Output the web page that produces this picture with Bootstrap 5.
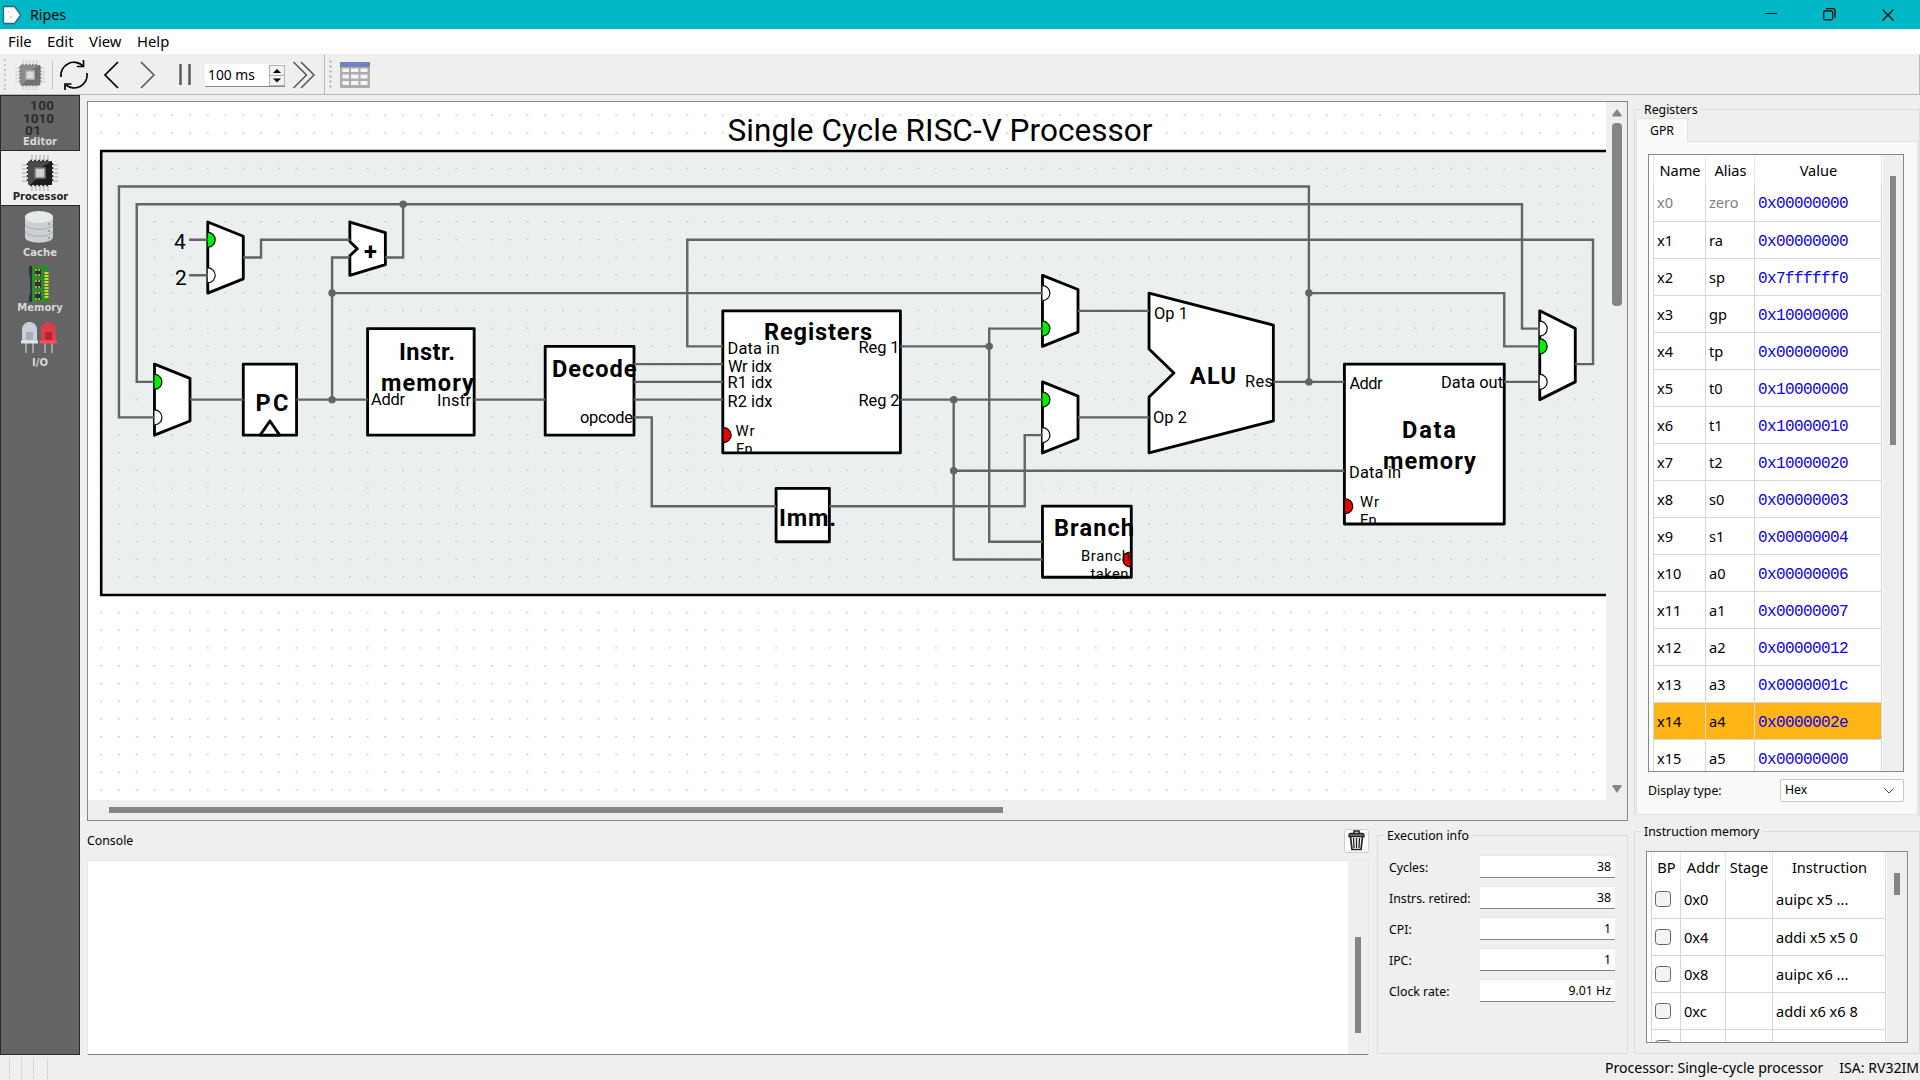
<!DOCTYPE html>
<html lang="en">
<head>
<meta charset="utf-8">
<title>Ripes</title>
<link rel="stylesheet" href="https://cdn.jsdelivr.net/npm/bootstrap@5.3.0/dist/css/bootstrap.min.css">
<style>
html,body{width:1920px;height:1080px;overflow:hidden}
body{background:#efefef;color:#000;font-family:"Noto Sans","Open Sans",sans-serif;font-size:12.3px;line-height:1.2}
svg{display:block;flex:none}
.titlebar{height:29px;background:#00b7c6;font-size:14.2px}
.app-icon{margin-left:2px}
.winctl{width:58.5px;height:29px}
.menus{height:26px;background:#fff;font-size:14.8px;border-bottom:1px solid #eee;padding-top:1px}
.menus a{color:#000;text-decoration:none}
.tools{height:40px;border-bottom:1px solid #b8b8b8;border-right:1px solid #b8b8b8}
.tool-split{border-left:1px solid #b8b8b8;width:5px}
.grip{width:3px;height:31px;background:radial-gradient(circle,#bbb 1.2px,transparent 1.4px) 0 0/3px 5px}
.spinbox{width:80px;height:23px;background:#fff;border-bottom:1px solid #868686;font-size:13.8px;padding-left:3px}
.spinbtns{width:16px;height:21px;border:1px solid #b0b0b0;background:#f3f3f3}
.main-area{height:961px}
.side{width:80px;height:960px;background:#646464;border:1px solid #2a2a2a}
.side-item{height:55px;color:#d8d8d8;font:bold 10px "DejaVu Sans",sans-serif;padding-bottom:3px}
.side-item svg{margin-right:2px}
.side-item.on{background:#efefef;color:#222;border-bottom:1px solid #2a2a2a;margin-right:-1px}
.side-item.edge{border-bottom:1px solid #2a2a2a}
.centre{width:1541px;margin-left:7px;padding-top:6px}
.viewer{height:720px;border:1px solid #828790}
.vbar{width:21px;height:698px}
.thumb{background:#858585}
.console-head{height:39px}
.trash{width:25px;height:24px;background:#fdfdfd;border:1px solid #cfcfcf;border-radius:3px}
.console{width:1282px;height:195px;background:#fff;border:1px solid #e8e8e8;border-bottom-color:#858585}
.console-bar{width:20px;background:#efefef;padding:76px 0 0 7px}
.group{border:1px solid #dcdcdc}
.group-title{height:18px;line-height:20px;background:#efefef;padding:0 3px;margin-top:-10px;width:max-content}
.exec{width:251px;height:219px;margin:14px 0 0 8px}
.field{width:135px;height:23px;background:#fff;border-bottom:1px solid #858585;line-height:22px;padding-right:4px;border-top:1px solid #e8e8e8}
.rightcol{width:286px;margin-left:6px;padding-top:14px}
.regs{height:707px;border-bottom-width:0}
.gpr-tab{width:52px;height:24px;background:#f9f9f9;border:1px solid #e3e3e3;border-bottom:0;line-height:24px;margin:0 0 -1px 1px;position:relative}
.pane{height:674px;width:282px;margin-left:1px;background:#f9f9f9;border:1px solid #e3e3e3;padding:12px 12px 0 11px}
.frame{border:1px solid #828790;background:#fff;overflow:hidden}
.gridt{table-layout:fixed;border-collapse:collapse;font-size:14.6px;line-height:18px;margin-left:4px;flex:none}
.gridt th{height:29px;font-weight:400;text-align:center;padding:1px 0 0 1px;border:solid #e6e6e6;border-width:0 1px}
.gridt td{height:37px;padding:0 0 0 3px;border:1px solid #d6d6d6;white-space:nowrap}
.gridt tr:nth-child(2) td{border-top:0}
.gridt .hexv{font-family:"Liberation Mono",monospace;font-size:16px;letter-spacing:-.6px;color:#0c00f2;padding:4px 0 0 3px}
.gridt .hot td{background:#ffb516}
.gutter{background:#efefef}
.combo{width:124px;height:23px;background:#fff;border:1px solid #c8c8c8;border-radius:2px}
.imem{height:223px;margin-top:15px}
.cbx{width:16px;height:16px;border:1px solid #666;border-radius:3.5px;background:#f3f3f3}
.status{height:24px;font-size:14.07px}
.tick{width:1px;height:21px;background:#d5d5d5}
.dg text{font-family:Roboto,sans-serif;fill:#000}
.dg .b text{font-weight:700;font-size:23.6px}
.dg .s text{font-size:16.4px}
.dg .box{fill:#fff;stroke:#000;stroke-width:1.6;stroke-linejoin:round}
.dg .wire{fill:none;stroke:#646464;stroke-width:1.35}
.dg .dot{fill:#646464}
.dg .port{stroke:#000;stroke-width:.65}
</style>
<script src="https://cdn.jsdelivr.net/npm/bootstrap@5.3.0/dist/js/bootstrap.bundle.min.js"></script>
</head>
<body>
<svg width="0" height="0" class="position-absolute">
<defs>
<g id="chip">
<path d="M10 0V36M14 0V36M18 0V36M22 0V36M26 0V36M0 10H36M0 14H36M0 18H36M0 22H36M0 26H36" stroke="#c4c4b4" stroke-width="1.700"/>
<rect x="6" y="6" width="24" height="24" rx="1" fill="#4a4a4a"/>
<path d="M30 6V30H8L20 18V12Z" fill="#1c1c1c"/>
<path d="M8 5.500H28M8 30.500H28M5.500 8V28M30.500 8V28" stroke="#333" stroke-width="1.500" stroke-dasharray="2 2"/>
<rect x="13" y="13" width="10" height="10" fill="#cfcfcf" stroke="#777" stroke-width="1.500"/>
</g>
</defs>
</svg>

<div class="titlebar d-flex align-items-center">
<svg width="20" height="20" class="app-icon" viewBox="0 0 20 20"><path d="M2.500 1.500H12.500L18.500 10L12.500 18.500H2.500Q1.500 18.500 1.500 17.500V2.500Q1.500 1.500 2.500 1.500Z" fill="#fff" stroke="#345c86" stroke-width="1.300"/><path d="M4 7h1M6 7h1M8 11l1 2 1-2" stroke="#b0b8c0" fill="none" stroke-width=".7"/></svg>
<span class="ms-1 ps-1">Ripes</span>
<div class="ms-auto d-flex">
<div class="winctl d-flex align-items-center justify-content-center"><svg width="12" height="12"><path d="M0 4.500H12" stroke="#000"/></svg></div>
<div class="winctl d-flex align-items-center justify-content-center"><svg width="13" height="13" fill="none" stroke="#000" stroke-width="1.200"><rect x=".7" y="2.800" width="9" height="9" rx="1.500"/><path d="M3 .7H10Q12 .7 12 2.700V9.500"/></svg></div>
<div class="winctl d-flex align-items-center justify-content-center" style="margin-right:3px"><svg width="12" height="12" stroke="#000" stroke-width="1.100"><path d="M.5.5L11.500 11.500M11.500.5L.5 11.500"/></svg></div>
</div>
</div>

<nav class="menus d-flex align-items-center ps-2">
<a href="#" style="width:39px">File</a><a href="#" style="width:42px">Edit</a><a href="#" style="width:48px">View</a><a href="#">Help</a>
</nav>

<div class="tools d-flex align-items-center">
<svg width="324" height="39" viewBox="0 55 324 39" fill="none">
<g fill="#b8b8b8"><circle cx="5" cy="60" r="1"/><circle cx="5" cy="65" r="1"/><circle cx="5" cy="70" r="1"/><circle cx="5" cy="75" r="1"/><circle cx="5" cy="80" r="1"/><circle cx="5" cy="85" r="1"/><circle cx="5" cy="89" r="1"/></g>
<use href="#chip" transform="translate(15 60) scale(.84)" opacity=".6"/>
<path d="M52.500 60V90" stroke="#c8c8c8"/>
<g stroke="#000" stroke-width="1.700"><path d="M61 77A13 13 0 0 1 83 66M87 73A13 13 0 0 1 66 85"/><path d="M83.500 60V66.500H77M65 90V84H71.500"/></g>
<path d="M118 62L105 75L118 88" stroke="#000" stroke-width="1.700"/>
<path d="M141 62L154 75L141 88" stroke="#555" stroke-width="1.500"/>
<path d="M180.500 64V85M189.500 64V85" stroke="#606060" stroke-width="2.600"/>
<path d="M293.500 62L306.500 75L293.500 88M301 62L314 75L301 88" stroke="#555" stroke-width="1.500"/>
<foreignObject x="205" y="64" width="80" height="24">
<div class="spinbox d-flex align-items-center justify-content-between"><span>100 ms</span>
<div class="spinbtns"><svg width="14" height="19"><path d="M0 9.500H14" stroke="#b0b0b0"/><path d="M3 7L7 3L11 7ZM3 12.500L7 16.500L11 12.500Z" fill="#000"/></svg></div></div>
</foreignObject>
</svg>
<div class="tool-split align-self-stretch"></div>
<div class="grip"></div>
<svg width="30" height="26" class="ms-2"><path d="M0 0H30V26H0Z" fill="#acacac"/><path d="M0 0H30V5H0Z" fill="#7181be"/><g fill="#f4f4f4"><path d="M2.500 6.500h6.500v3.500h-6.500zM11 6.500h7.500v3.500h-7.500zM20.500 6.500h7v3.500h-7zM2.500 12.500h6.500v4h-6.500zM11 12.500h7.500v4h-7.500zM20.500 12.500h7v4h-7zM2.500 19h6.500v4h-6.500zM11 19h7.500v4h-7.500zM20.500 19h7v4h-7z"/></g></svg>
</div>

<div class="main-area d-flex">
<aside class="side">
<div class="side-item edge d-flex flex-column align-items-center justify-content-end"><svg width="34" height="38" viewBox="0 0 34 38" fill="#2c2c2c" font-family="Roboto" font-weight="700" font-size="13.500"><text x="8" y="11.500" textLength="24">100</text><text x="1" y="24.500" textLength="31">1010</text><text x="3" y="37" textLength="16">01</text></svg><span>Editor</span></div>
<div class="side-item on d-flex flex-column align-items-center justify-content-end"><svg width="36" height="36"><use href="#chip"/></svg><span>Processor</span></div>
<div class="side-item d-flex flex-column align-items-center justify-content-end"><svg width="28" height="32" class="mb-1"><path d="M0 6V26C0 33.500 28 33.500 28 26V6Z" fill="#cbd0d3"/><ellipse cx="14" cy="6" rx="14" ry="6" fill="#e6e9ea"/><path d="M0 13C1 20 27 20 28 13M0 20C1 27 27 27 28 20" fill="none" stroke="#a5abaf"/><path d="M23 13h2M23 20h2M23 27h2" stroke="#8c9296" stroke-width="1.500"/></svg><span>Cache</span></div>
<div class="side-item d-flex flex-column align-items-center justify-content-end"><svg width="20" height="36"><path d="M0 0H4V36H0V29L1 28V10L0 9Z" fill="#243746"/><path d="M3 0H20V8Q18 10 20 12V36H3Z" fill="#2f8a2c"/><path d="M6 3h6v7H6zM6 14h6v8H6zM6 26h6v8H6z" fill="#28323a"/><path d="M6 4h6M6 9h6M6 15h6M6 21h6M6 27h6M6 33h6" stroke="#d3cc55" stroke-width="1.500" stroke-dasharray="2 1"/><path d="M17.500 6V32" stroke="#e3cf3c" stroke-width="4" stroke-dasharray="2 1"/></svg><span>Memory</span></div>
<div class="side-item d-flex flex-column align-items-center justify-content-end"><svg width="36" height="31" class="mb-1"><path d="M5 21V31M12 21V31M24 21V31M31 21V31" stroke="#b5b8bc" stroke-width="1.500"/><path d="M1 20V7.500C1 -2.500 16 -2.500 16 7.500V20Z" fill="#c9ced8"/><path d="M20 20V7.500C20 -2.500 35 -2.500 35 7.500V20Z" fill="#db3e4b"/><path d="M5 10h7v8H5z" fill="#a6adb9"/><path d="M24 10h7v8h-7z" fill="#bd2030"/><path d="M0 18.500h17v3H0z" fill="#dfe3ea"/><path d="M19 18.500h17v3H19z" fill="#f04f5d"/></svg><span>I/O</span></div>
</aside>

<section class="centre">
<div class="viewer">
<div class="d-flex">
<svg class="dg" width="1518" height="698" viewBox="88 102 1518 698">
<defs>
<pattern id="dots" patternUnits="userSpaceOnUse" x="100.200" y="114.500" width="17.760" height="17.760"><rect width="2" height="1.300" fill="#c4c8c9"/></pattern>
</defs>
<path d="M88 102H1607V800H88Z" fill="#fff"/>
<path d="M101.200 151H1640V595H101.200Z" fill="#ebeff0"/>
<path d="M100 114H1607V800H100Z" fill="url(#dots)"/>
<path d="M1640 151H101.200V595H1640" fill="none" stroke="#000" stroke-width="2.600"/>
<g transform="translate(101.200 151) scale(1.776)">
<g class="box">
<path d="M60 40L80 48V72L60 80Z"/><path d="M30 120L50 128V152L30 160Z"/>
<path d="M140 40L160 46V64L140 70V59L144.200 55L140 51Z"/>
<path d="M80 120H110V160H80Z"/><path d="M89.500 160L95 152L100.500 160Z"/>
<path d="M150 100H210V160H150Z"/><path d="M250 110H300V160H250Z"/><path d="M350 90H450V170H350Z"/><path d="M380 190H410V220H380Z"/>
<path d="M530 70L550 78V102L530 110Z"/><path d="M530 130L550 138V162L530 170Z"/>
<path d="M590 80L660 98V152L590 170V138.500L604 125L590 111.500Z"/>
<path d="M530 200H580V240H530Z"/><path d="M700 120H790V210H700Z"/><path d="M810 90L830 100V130L810 140Z"/>
</g>
<g class="port">
<path d="M60 45.800A4.200 4.200 0 0 1 60 54.200M30 125.800A4.200 4.200 0 0 1 30 134.200M530 95.800A4.200 4.200 0 0 1 530 104.200M530 135.800A4.200 4.200 0 0 1 530 144.200M810 105.800A4.200 4.200 0 0 1 810 114.200" fill="#00f000"/>
<path d="M60 65.800A4.200 4.200 0 0 1 60 74.200M30 145.800A4.200 4.200 0 0 1 30 154.200M530 75.800A4.200 4.200 0 0 1 530 84.200M530 155.800A4.200 4.200 0 0 1 530 164.200M810 95.800A4.200 4.200 0 0 1 810 104.200M810 125.800A4.200 4.200 0 0 1 810 134.200" fill="#fff"/>
<path d="M350.500 155.800A4.200 4.200 0 0 1 350.500 164.200M700.500 195.800A4.200 4.200 0 0 1 700.500 204.200M579.500 225.800A4.200 4.200 0 0 0 579.500 234.200" fill="#f00000"/>
</g>
<g class="wire">
<path d="M49.500 50H60M49.500 70H60M80 60H90V50H140M160 60H170V30"/>
<path d="M30 130H20V30H800V100H810"/><path d="M30 150H10V20H680V130"/>
<path d="M50 140H80M110 140H150M130 140V60H140M130 80H530M210 140H250"/>
<path d="M300 120H350M300 130H350M300 140H350M300 150H310V200H380M410 200H520V160H530"/>
<path d="M830 120H840V50H330V110H350"/>
<path d="M450 110H500M530 100H500V220H530M450 140H530M480 140V230H530M480 180H700"/>
<path d="M550 90H590M550 150H590M660 130H700M680 80H790V110H810M790 130H810"/>
</g>
<g class="dot"><circle cx="170" cy="30" r="2.100"/><circle cx="130" cy="80" r="2.100"/><circle cx="130" cy="140" r="2.100"/><circle cx="500" cy="110" r="2.100"/><circle cx="480" cy="140" r="2.100"/><circle cx="480" cy="180" r="2.100"/><circle cx="680" cy="80" r="2.100"/><circle cx="680" cy="130" r="2.100"/></g>
</g>
<text x="727.500" y="140.700" font-size="31.500" textLength="425">Single Cycle RISC-V Processor</text>
<g font-size="21"><text x="174" y="248.700">4</text><text x="175" y="285">2</text></g>
<g class="b">
<text x="364" y="260">+</text><text x="255.500" y="410.500" textLength="33">PC</text>
<text x="399" y="360" textLength="56">Instr.</text><text x="381" y="391" textLength="93">memory</text>
<text x="552" y="377.300" textLength="84.500">Decode</text><text x="764" y="339.700" textLength="108">Registers</text>
<text x="779" y="526" textLength="57">Imm.</text><text x="1190" y="384" textLength="46">ALU</text>
<text x="1054" y="535.500" textLength="80">Branch</text><text x="1402" y="437.500" textLength="54">Data</text><text x="1383" y="468.700" textLength="93">memory</text>
</g>
<g class="s">
<text x="371" y="405" textLength="34">Addr</text><text x="437" y="406" textLength="34">Instr</text><text x="580" y="422.500" textLength="53">opcode</text>
<text x="727.500" y="354.300" textLength="52">Data in</text><text x="728" y="372" textLength="44">Wr idx</text><text x="727.500" y="388" textLength="45">R1 idx</text><text x="727.500" y="407" textLength="45">R2 idx</text>
<text x="858.500" y="353" textLength="41">Reg 1</text><text x="858.500" y="406" textLength="41">Reg 2</text>
<text x="1154" y="318.700" textLength="34">Op 1</text><text x="1153" y="422.700" textLength="34">Op 2</text><text x="1245" y="387" textLength="28">Res</text>
<text x="1349.500" y="389" textLength="33">Addr</text><text x="1441" y="388" textLength="62">Data out</text><text x="1349" y="477.700" textLength="52">Data in</text>
</g>
<g font-size="14.800">
<text x="735.500" y="436" textLength="19">Wr</text><text x="1360" y="507" textLength="19">Wr</text>
<text x="1081" y="560.700" textLength="49">Branch</text>
</g>
<svg x="735" y="438" width="30" height="14.500" viewBox="735 438 30 14.500"><text x="736" y="454" font-size="14.800">En</text></svg>
<svg x="1359" y="509" width="30" height="14.500" viewBox="1359 509 30 14.500"><text x="1360" y="525" font-size="14.800">En</text></svg>
<text x="1090.500" y="578.500" textLength="38" font-size="14.800">taken</text>
</svg>
<div class="vbar d-flex flex-column align-items-center">
<svg width="10" height="8" style="margin-top:7px"><path d="M5 0L9.500 6V7.500H.5V6Z" fill="#858585"/></svg>
<div class="thumb rounded-1" style="width:10px;height:183px;margin-top:6px"></div>
<svg width="10" height="8" class="mt-auto" style="margin-bottom:7px"><path d="M.5 0H9.500V1.500L5 8L.5 1.500Z" fill="#858585"/></svg>
</div>
</div>
<div style="padding:7px 0 0 21px"><div class="thumb" style="width:894px;height:6px"></div></div>
</div>
<div class="d-flex">
<div>
<div class="console-head d-flex align-items-center justify-content-between"><span style="padding-top:2px">Console</span>
<div class="trash d-flex align-items-center justify-content-center"><svg width="17" height="21" fill="none" stroke="#222"><path d="M6 3V1H11V3" stroke-width="1.500"/><path d="M1 6.500V5Q1 3.500 3 3.500H14Q16 3.500 16 5V6.500Z" fill="#777" stroke-width="1.300"/><path d="M2.500 7L4 19.500H13L14.500 7" stroke-width="1.700"/><path d="M5.500 8L6 18M8.500 8V18M11.500 8L11 18" stroke-width="1.300"/></svg></div>
</div>
<div class="console d-flex justify-content-end"><div class="console-bar"><div class="thumb" style="width:6px;height:96px"></div></div></div>
</div>
<div class="group exec">
<div class="group-title" style="margin-left:6px">Execution info</div>
<div class="d-flex flex-column gap-2" style="padding:11px 12px 0 11px">
<div class="d-flex justify-content-between align-items-center"><span class="pt-1">Cycles:</span><div class="field text-end">38</div></div>
<div class="d-flex justify-content-between align-items-center"><span class="pt-1">Instrs. retired:</span><div class="field text-end">38</div></div>
<div class="d-flex justify-content-between align-items-center"><span class="pt-1">CPI:</span><div class="field text-end">1</div></div>
<div class="d-flex justify-content-between align-items-center"><span class="pt-1">IPC:</span><div class="field text-end">1</div></div>
<div class="d-flex justify-content-between align-items-center"><span class="pt-1">Clock rate:</span><div class="field text-end">9.01 Hz</div></div>
</div>
</div>
</div>
</section>

<aside class="rightcol">
<div class="group regs">
<div class="group-title" style="margin-left:6px">Registers</div>
<div class="gpr-tab text-center">GPR</div>
<div class="pane">
<div class="frame d-flex" style="width:256px;height:618px">
<table class="gridt" style="width:228px">
<colgroup><col style="width:52px"><col style="width:49px"><col style="width:127px"></colgroup>
<tr><th>Name</th><th>Alias</th><th>Value</th></tr>
<tr style="color:#808080"><td>x0</td><td>zero</td><td class="hexv">0x00000000</td></tr>
<tr><td>x1</td><td>ra</td><td class="hexv">0x00000000</td></tr>
<tr><td>x2</td><td>sp</td><td class="hexv">0x7ffffff0</td></tr>
<tr><td>x3</td><td>gp</td><td class="hexv">0x10000000</td></tr>
<tr><td>x4</td><td>tp</td><td class="hexv">0x00000000</td></tr>
<tr><td>x5</td><td>t0</td><td class="hexv">0x10000000</td></tr>
<tr><td>x6</td><td>t1</td><td class="hexv">0x10000010</td></tr>
<tr><td>x7</td><td>t2</td><td class="hexv">0x10000020</td></tr>
<tr><td>x8</td><td>s0</td><td class="hexv">0x00000003</td></tr>
<tr><td>x9</td><td>s1</td><td class="hexv">0x00000004</td></tr>
<tr><td>x10</td><td>a0</td><td class="hexv">0x00000006</td></tr>
<tr><td>x11</td><td>a1</td><td class="hexv">0x00000007</td></tr>
<tr><td>x12</td><td>a2</td><td class="hexv">0x00000012</td></tr>
<tr><td>x13</td><td>a3</td><td class="hexv">0x0000001c</td></tr>
<tr class="hot"><td>x14</td><td>a4</td><td class="hexv">0x0000002e</td></tr>
<tr><td>x15</td><td>a5</td><td class="hexv">0x00000000</td></tr>
</table>
<div class="gutter flex-fill" style="margin-left:1px;padding:21px 0 0 7px"><div class="thumb" style="width:6px;height:269px"></div></div>
</div>
<div class="d-flex justify-content-between align-items-center" style="margin-top:7px;width:256px"><span style="padding-top:2px">Display type:</span>
<div class="combo d-flex align-items-center justify-content-between ps-1 pe-1"><span>Hex</span><svg width="12" height="8" class="me-1"><path d="M1.500 1.500L6 6L10.500 1.500" fill="none" stroke="#444"/></svg></div></div>
</div>
</div>
<div class="group imem">
<div class="group-title" style="margin-left:6px">Instruction memory</div>
<div class="frame d-flex" style="width:262px;height:192px;margin:11px 0 0 11px">
<table class="gridt" style="width:234px">
<colgroup><col style="width:29px"><col style="width:45px"><col style="width:47px"><col style="width:113px"></colgroup>
<tr><th>BP</th><th>Addr</th><th class="px-0">Stage</th><th>Instruction</th></tr>
<tr><td><div class="cbx"></div></td><td>0x0</td><td></td><td>auipc x5 ...</td></tr>
<tr><td><div class="cbx"></div></td><td>0x4</td><td></td><td>addi x5 x5 0</td></tr>
<tr><td><div class="cbx"></div></td><td>0x8</td><td></td><td>auipc x6 ...</td></tr>
<tr><td><div class="cbx"></div></td><td>0xc</td><td></td><td>addi x6 x6 8</td></tr>
<tr><td><div class="cbx"></div></td><td></td><td></td><td></td></tr>
</table>
<div class="gutter flex-fill" style="margin-left:1px;padding:21px 0 0 7px"><div class="thumb" style="width:6px;height:22px"></div></div>
</div>
</div>
</aside>
</div>

<footer class="status d-flex align-items-center">
<div class="d-flex" style="padding-left:9px;gap:11px"><div class="tick"></div><div class="tick"></div><div class="tick"></div><div class="tick" style="margin-left:2px"></div></div>
<div class="ms-auto d-flex" style="gap:16px;padding-right:1px"><span>Processor: Single-cycle processor</span><span>ISA: RV32IM</span></div>
</footer>
</body>
</html>
